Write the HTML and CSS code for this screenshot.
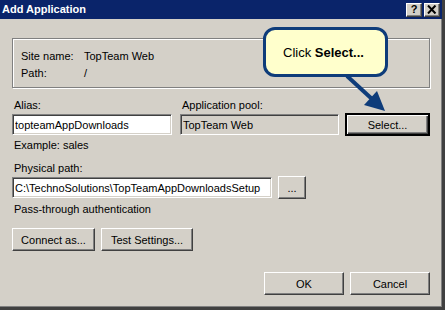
FILE: index.html
```html
<!DOCTYPE html>
<html lang="en">
<head>
  <meta charset="UTF-8" />
  <title>Add Application</title>
  <link rel="stylesheet" href="styles.css">
</head>
<body>
  <div class="window">
    <div class="titlebar">
      <span class="title">Add Application</span>
      <div class="caption-btns">
        <span class="cap-btn help">?</span>
        <span class="cap-btn">
          <svg width="10" height="9" viewBox="0 0 10 9"><path d="M1 0.5 L8.5 8.5 M8.5 0.5 L1 8.5" stroke="#000" stroke-width="2"/></svg>
        </span>
      </div>
    </div>

    <div class="dialog">
      <div class="groupbox">
        <div class="info-row"><span class="info-label">Site name:</span><span>TopTeam Web</span></div>
        <div class="info-row"><span class="info-label">Path:</span><span>/</span></div>
      </div>

      <div class="field-labels">
        <label class="lbl alias-col" for="alias">Alias:</label>
        <label class="lbl pool-col" for="pool">Application pool:</label>
      </div>
      <div class="field-row">
        <input class="textbox alias-col" id="alias" type="text" value="topteamAppDownloads">
        <input class="textbox pool-col" id="pool" type="text" value="TopTeam Web" disabled>
        <button class="btn default select-btn">Select...</button>
      </div>
      <div class="hint">Example: sales</div>

      <label class="lbl path-label" for="path">Physical path:</label>
      <div class="field-row">
        <input class="textbox path-input" id="path" type="text" value="C:\TechnoSolutions\TopTeamAppDownloadsSetup">
        <button class="btn browse-btn">...</button>
      </div>
      <div class="hint auth">Pass-through authentication</div>

      <div class="btn-row">
        <button class="btn connect-btn">Connect as...</button>
        <button class="btn test-btn">Test Settings...</button>
      </div>

      <div class="dialog-btns">
        <button class="btn wide">OK</button>
        <button class="btn wide">Cancel</button>
      </div>
    </div>

    <!-- callout over the dialog -->
    <div class="callout">Click&nbsp;<b>Select...</b></div>
    <svg class="callout-arrow" width="445" height="310" viewBox="0 0 445 310">
      <line x1="347" y1="76" x2="372" y2="99" stroke="#0e3c7a" stroke-width="4"/>
      <polygon points="385,111 364,105 377,91" fill="#0e3c7a"/>
    </svg>
  </div>
</body>
</html>
```

FILE: styles.css
```css
* { box-sizing: border-box; margin: 0; padding: 0; }
body {
  background: #d4d0c8;
  font-family: 'Liberation Sans', Arial, sans-serif;
  font-size: 11px;
  color: #000;
}
.window {
  position: relative;
  width: 445px;
  height: 310px;
  background: #d4d0c8;
  border-right: 3px solid #404040;
  border-bottom: 3px solid #404040;
  box-shadow: inset -1px -1px #808080;
  overflow: hidden;
}

/* Title bar */
.titlebar {
  display: flex;
  align-items: center;
  justify-content: space-between;
  height: 19px;
  margin-right: -3px;
  padding-left: 2px;
  background: #0a246a;
}
.title {
  color: #fff;
  font-weight: bold;
  font-size: 11px;
  line-height: 19px;
}
.caption-btns {
  display: flex;
  gap: 2px;
  margin-right: 5px;
}
.cap-btn {
  display: flex;
  align-items: center;
  justify-content: center;
  width: 16px;
  height: 14px;
  background: #d4d0c8;
  border: 1px solid;
  border-color: #fff #404040 #404040 #fff;
  box-shadow: inset -1px -1px #808080;
  font-weight: bold;
  font-size: 11px;
  line-height: 1;
}
.cap-btn.help { padding-bottom: 1px; }

/* Dialog body */
.dialog {
  padding: 0 12px;
}
.groupbox {
  margin-top: 19px;
  height: 50px;
  padding: 9px 0 0 8px;
  border: 1px solid #808080;
  box-shadow: inset 1px 1px #fff, 1px 1px #fff;
}
.info-row {
  display: flex;
  line-height: 17px;
}
.info-label { width: 63px; }

.lbl {
  display: block;
  line-height: 13px;
  padding-left: 2px;
}
.field-labels {
  display: flex;
  margin-top: 11px;
}
.field-labels .alias-col { width: 168px; }
.field-row {
  display: flex;
  align-items: center;
  height: 23px;
  margin-top: 1px;
}
.textbox {
  height: 21px;
  padding: 0 2px;
  font-family: inherit;
  font-size: 11px;
  color: #000;
  background: #fff;
  border: 1px solid;
  border-color: #808080 #fff #fff #808080;
  box-shadow: inset 1px 1px #404040, inset -1px -1px #d4d0c8;
  outline: none;
}
.textbox:disabled {
  background: #d4d0c8;
  color: #000;
  -webkit-text-fill-color: #000;
}
.field-row .alias-col { width: 160px; }
.field-row .pool-col { width: 159px; margin-left: 8px; }
.path-input { width: 260px; }

.btn {
  height: 23px;
  font-family: inherit;
  font-size: 11px;
  color: #000;
  background: #d4d0c8;
  border: 1px solid;
  border-color: #fff #404040 #404040 #fff;
  box-shadow: inset -1px -1px #808080;
}
.btn.default {
  border: 2px solid #000;
  box-shadow: inset 1px 1px #fff, inset -1px -1px #404040, inset -2px -2px #808080;
}
.select-btn { width: 85px; margin-left: 6px; }
.browse-btn { width: 28px; margin-left: 6px; }

.hint {
  line-height: 13px;
  margin-top: 3px;
  padding-left: 2px;
}
.path-label { margin-top: 10px; }
.hint.auth { margin-top: 4px; }

.btn-row {
  display: flex;
  gap: 6px;
  margin-top: 12px;
}
.connect-btn { width: 83px; }
.test-btn { width: 92px; }

.dialog-btns {
  display: flex;
  justify-content: flex-end;
  gap: 6px;
  margin-top: 21px;
}
.btn.wide { width: 80px; }

/* Callout */
.callout {
  position: absolute;
  left: 263px;
  top: 27px;
  width: 125px;
  height: 50px;
  display: flex;
  align-items: center;
  padding-left: 17px;
  background: #ffffcc;
  border: 3px solid #0e3c7a;
  border-radius: 12px;
  font-size: 13px;
}
.callout-arrow {
  position: absolute;
  left: 0;
  top: 0;
  pointer-events: none;
}
```
